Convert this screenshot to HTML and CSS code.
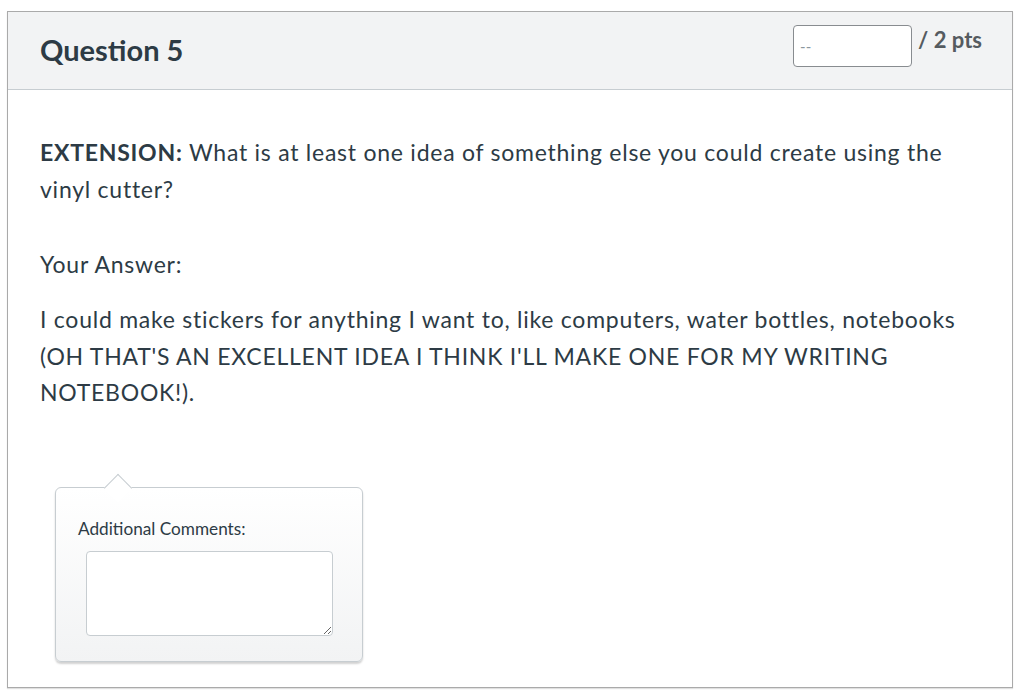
FILE: index.html
```html
<!DOCTYPE html>
<html lang="en">
<head>
<meta charset="utf-8">
<title>Question 5</title>
<link rel="stylesheet" href="styles.css">
</head>
<body>
<div class="page">
  <div class="question">
    <div class="q-header">
      <h2 class="q-name">Question 5</h2>
      <div class="q-points">
        <input class="q-score" type="text" placeholder="--">
        <span class="q-possible">/ 2 pts</span>
      </div>
    </div>
    <div class="q-body">
      <p class="q-text"><strong>EXTENSION:</strong> What is at least one idea of something else you could create using the vinyl cutter?</p>
      <p class="q-label">Your Answer:</p>
      <p class="q-answer">I could make stickers for anything I want to, like computers, water bottles, notebooks (OH THAT'S AN EXCELLENT IDEA I THINK I'LL MAKE ONE FOR MY WRITING NOTEBOOK!).</p>
      <div class="comment-box">
        <label class="comment-label" for="comments">Additional Comments:</label>
        <textarea id="comments" class="comment-input"></textarea>
      </div>
    </div>
  </div>
</div>
</body>
</html>
```

FILE: styles.css
```css
html, body {
  margin: 0;
  padding: 0;
  background: #ffffff;
}

body {
  font-family: Lato, "Open Sans", "Liberation Sans", sans-serif;
  color: #2d3b45;
}

.page {
  padding: 11px 11px 11px 7px;
}

.question {
  border: 1px solid #aaaaaa;
  box-shadow: 0 1px 1px rgba(0, 0, 0, 0.12);
  background: #ffffff;
}

.q-header {
  display: flex;
  justify-content: space-between;
  align-items: flex-start;
  height: 78px;
  background: #f2f3f4;
  border-bottom: 1px solid #c7cdd1;
  box-sizing: border-box;
  padding: 0 30px 0 32px;
}

.q-name {
  margin: 0;
  padding-top: 21px;
  font-size: 29px;
  font-weight: 700;
  line-height: 34.8px;
  color: #2d3b45;
}

.q-points {
  display: flex;
  align-items: flex-start;
  gap: 6px;
  padding-top: 13px;
}

.q-score {
  width: 119px;
  height: 42px;
  box-sizing: border-box;
  border: 1px solid #888c90;
  border-radius: 4px;
  padding: 0 6px;
  font-family: Lato, "Open Sans", sans-serif;
  font-size: 15px;
  color: #2d3b45;
  background: #ffffff;
}

.q-score::placeholder {
  color: #8b969e;
}

.q-possible {
  font-size: 22px;
  font-weight: 700;
  color: #555b60;
  line-height: 25px;
  margin-top: 2px;
}

.q-body {
  padding: 44px 28px 25px 32px;
  font-size: 23px;
  letter-spacing: 0.75px;
  line-height: 36.7px;
}

.q-body p {
  margin: 0;
}

.q-text strong {
  font-weight: 700;
}

.q-label {
  margin-top: 38.6px !important;
}

.q-answer {
  margin-top: 18.3px !important;
}

.comment-box {
  position: relative;
  margin: 76px 0 0 15px;
  width: 308px;
  box-sizing: border-box;
  border: 1px solid #c7cdd1;
  border-radius: 6px;
  background: linear-gradient(#ffffff, #f2f3f4);
  box-shadow: 0 2px 2px rgba(0, 0, 0, 0.18);
  padding: 31px 30px 25px 22px;
  display: flex;
  flex-direction: column;
  line-height: normal;
  letter-spacing: 0;
}

.comment-box::before {
  content: "";
  position: absolute;
  top: -10.5px;
  left: 52px;
  width: 19px;
  height: 19px;
  background: #ffffff;
  border-top: 1px solid #c7cdd1;
  border-left: 1px solid #c7cdd1;
  transform: rotate(45deg);
}

.comment-label {
  font-size: 17.2px;
  color: #2d3b45;
  line-height: 20px;
}

.comment-input {
  margin: 11.5px 0 0 8px;
  width: 247px;
  height: 85px;
  box-sizing: border-box;
  border: 1px solid #c7cdd1;
  border-radius: 4px;
  background: #ffffff;
  font-family: Lato, "Open Sans", sans-serif;
}
```
